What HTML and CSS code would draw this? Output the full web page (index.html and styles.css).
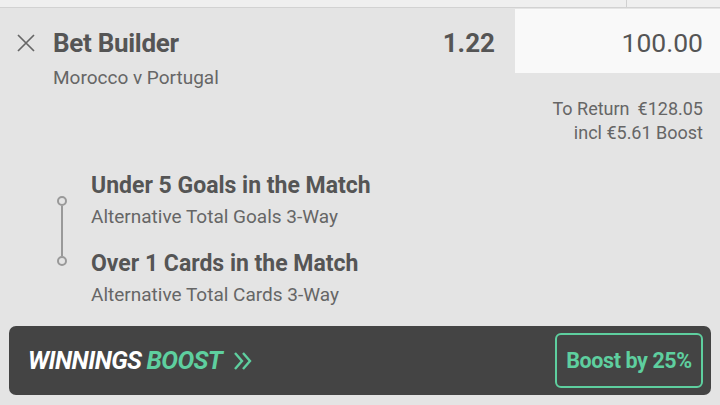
FILE: index.html
```html
<!DOCTYPE html>
<html lang="en">
<head>
  <meta charset="UTF-8">
  <meta name="viewport" content="width=device-width, initial-scale=1.0">
  <title>Bet Slip</title>
  <link rel="stylesheet" href="styles.css">
</head>
<body>
  <div class="top-strip">
    <div class="strip-left"></div>
    <div class="strip-right"></div>
  </div>

  <div class="bet">
    <div class="bet-head">
      <button class="remove" aria-label="Remove">
        <svg width="18" height="18" viewBox="0 0 18 18">
          <path d="M1 1 L17 17 M17 1 L1 17" stroke="#666" stroke-width="1.7" fill="none"/>
        </svg>
      </button>
      <div class="bet-info">
        <h2 class="bet-title">Bet Builder</h2>
        <p class="bet-event">Morocco v Portugal</p>
      </div>
      <div class="bet-odds">1.22</div>
      <div class="stake">100.00</div>
    </div>

    <div class="returns">
      <p>To Return<span class="amount">€128.05</span></p>
      <p>incl €5.61 Boost</p>
    </div>

    <div class="legs">
      <div class="timeline">
        <span class="dot"></span>
        <span class="line"></span>
        <span class="dot"></span>
      </div>
      <div class="leg-list">
        <div class="leg">
          <h3>Under 5 Goals in the Match</h3>
          <p>Alternative Total Goals 3-Way</p>
        </div>
        <div class="leg">
          <h3>Over 1 Cards in the Match</h3>
          <p>Alternative Total Cards 3-Way</p>
        </div>
      </div>
    </div>
  </div>

  <div class="boost-bar">
    <div class="boost-label">
      <span class="word-white">WINNINGS</span>
      <span class="word-green">BOOST</span>
      <svg class="chevrons" width="20" height="20" viewBox="0 0 20 20">
        <path d="M2 2 L9 10 L2 18 M10 2 L17 10 L10 18" stroke="#5ecf9f" stroke-width="2.4" fill="none"/>
      </svg>
    </div>
    <button class="boost-btn">Boost by 25%</button>
  </div>
</body>
</html>
```

FILE: styles.css
```css
body {
  margin: 0;
  padding: 0;
  background: #e4e4e4;
  font-family: Roboto, 'Noto Sans', sans-serif;
  color: #555;
  width: 720px;
  height: 405px;
  overflow: hidden;
}

p, h2, h3 {
  margin: 0;
}

.top-strip {
  display: flex;
  height: 7px;
  background: #efefef;
  border-bottom: 1px solid #d2d2d2;
}

.strip-left {
  width: 626px;
  border-right: 1px solid #d0d0d0;
}

.bet-head {
  display: flex;
  align-items: flex-start;
  padding-left: 17px;
}

.remove {
  background: none;
  border: none;
  padding: 0;
  margin-top: 26px;
  width: 18px;
  height: 18px;
  display: flex;
}

.bet-info {
  margin-left: 18px;
  padding-top: 20px;
  flex: 1;
}

.bet-title {
  font-size: 26px;
  font-weight: 700;
  letter-spacing: -0.3px;
  line-height: 30px;
  color: #555;
}

.bet-event {
  font-size: 19px;
  color: #666;
  line-height: 22px;
  margin-top: 9px;
}

.bet-odds {
  padding-top: 20px;
  font-size: 26px;
  font-weight: 700;
  line-height: 30px;
  margin-right: 20px;
}

.stake {
  width: 205px;
  height: 64px;
  margin-top: 1px;
  background: #f9f9f9;
  box-sizing: border-box;
  padding: 19px 17px 0 0;
  text-align: right;
  font-size: 26.5px;
  line-height: 30px;
  color: #555;
}

.returns {
  text-align: right;
  padding: 8px 17px 0 0;
  font-size: 18px;
  line-height: 24px;
  color: #666;
}

.amount {
  margin-left: 8px;
}

.legs {
  display: flex;
  padding: 27px 0 0 57px;
}

.timeline {
  display: flex;
  flex-direction: column;
  align-items: center;
  width: 10px;
  padding-top: 24px;
}

.dot {
  width: 6px;
  height: 6px;
  border: 2px solid #999;
  border-radius: 50%;
}

.line {
  width: 2px;
  height: 50px;
  background: #999;
}

.leg-list {
  margin-left: 24px;
}

.leg + .leg {
  margin-top: 22px;
}

.leg h3 {
  font-size: 23px;
  font-weight: 700;
  line-height: 28px;
  color: #555;
}

.leg p {
  font-size: 19px;
  line-height: 22px;
  margin-top: 6px;
  color: #666;
}

.boost-bar {
  margin: 20px 9px 0;
  height: 69px;
  box-sizing: border-box;
  background: #444;
  border-radius: 7px;
  display: flex;
  align-items: center;
  justify-content: space-between;
  padding: 0 8px 0 19px;
}

.boost-label {
  display: flex;
  align-items: center;
  font-size: 25px;
  font-weight: 700;
  font-style: italic;
  letter-spacing: -0.6px;
}

.word-white {
  color: #fff;
}

.word-green {
  color: #5ecf9f;
  margin-left: 5px;
}

.chevrons {
  margin-left: 11px;
}

.boost-btn {
  background: none;
  border: 2px solid #5ecf9f;
  border-radius: 6px;
  color: #5ecf9f;
  font-family: Roboto, sans-serif;
  font-size: 21.5px;
  font-weight: 700;
  letter-spacing: -0.4px;
  width: 148px;
  height: 55px;
  padding: 0;
}
```
